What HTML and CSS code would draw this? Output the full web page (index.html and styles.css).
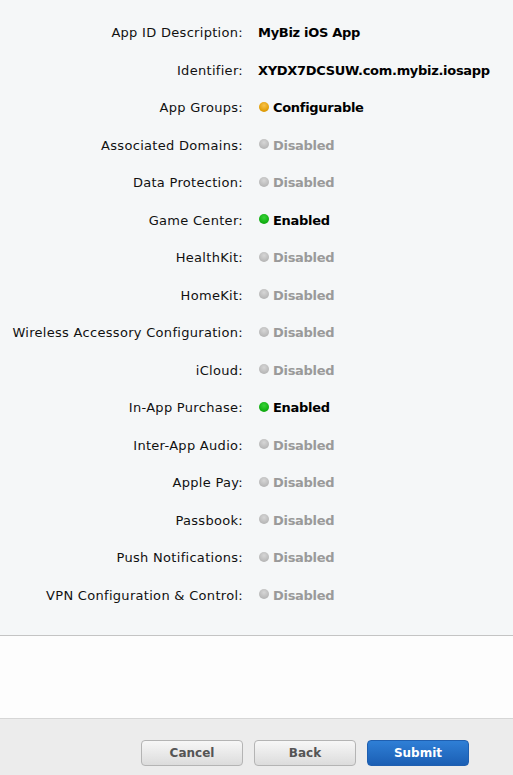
FILE: index.html
```html
<!DOCTYPE html>
<html>
<head>
<meta charset="utf-8">
<link rel="stylesheet" href="styles.css">
</head>
<body>
<div class="page">
  <div class="details">
    <div class="row"><div class="label">App ID Description:</div><div class="value">MyBiz iOS App</div></div>
    <div class="row"><div class="label">Identifier:</div><div class="value">XYDX7DCSUW.com.mybiz.iosapp</div></div>
    <div class="row"><div class="label">App Groups:</div><div class="value"><span class="dot orange"></span>Configurable</div></div>
    <div class="row"><div class="label">Associated Domains:</div><div class="value off"><span class="dot gray"></span>Disabled</div></div>
    <div class="row"><div class="label">Data Protection:</div><div class="value off"><span class="dot gray"></span>Disabled</div></div>
    <div class="row"><div class="label">Game Center:</div><div class="value"><span class="dot green"></span>Enabled</div></div>
    <div class="row"><div class="label">HealthKit:</div><div class="value off"><span class="dot gray"></span>Disabled</div></div>
    <div class="row"><div class="label">HomeKit:</div><div class="value off"><span class="dot gray"></span>Disabled</div></div>
    <div class="row"><div class="label">Wireless Accessory Configuration:</div><div class="value off"><span class="dot gray"></span>Disabled</div></div>
    <div class="row"><div class="label">iCloud:</div><div class="value off"><span class="dot gray"></span>Disabled</div></div>
    <div class="row"><div class="label">In-App Purchase:</div><div class="value"><span class="dot green"></span>Enabled</div></div>
    <div class="row"><div class="label">Inter-App Audio:</div><div class="value off"><span class="dot gray"></span>Disabled</div></div>
    <div class="row"><div class="label">Apple Pay:</div><div class="value off"><span class="dot gray"></span>Disabled</div></div>
    <div class="row"><div class="label">Passbook:</div><div class="value off"><span class="dot gray"></span>Disabled</div></div>
    <div class="row"><div class="label">Push Notifications:</div><div class="value off"><span class="dot gray"></span>Disabled</div></div>
    <div class="row"><div class="label">VPN Configuration &amp; Control:</div><div class="value off"><span class="dot gray"></span>Disabled</div></div>
  </div>
  <div class="blank"></div>
  <div class="footer">
    <button class="btn">Cancel</button>
    <button class="btn">Back</button>
    <button class="btn primary">Submit</button>
  </div>
</div>
</body>
</html>
```
FILE: styles.css
```css
html, body {
  margin: 0;
  padding: 0;
  background: #fdfdfd;
}
body {
  font-family: "DejaVu Sans", "Liberation Sans", sans-serif;
  font-size: 13px;
  color: #111;
}
.page {
  width: 513px;
  height: 775px;
  display: flex;
  flex-direction: column;
}
.details {
  background: #f5f7f8;
  border-bottom: 1px solid #c4c4c4;
  padding: 14px 0 16px;
  height: 636px;
  box-sizing: border-box;
}
.row {
  display: grid;
  grid-template-columns: 243px 1fr;
  column-gap: 15px;
  height: 37.5px;
  align-items: center;
}
.label {
  text-align: right;
  color: #111;
  white-space: nowrap;
  letter-spacing: 0.3px;
}
.value {
  font-weight: bold;
  color: #000;
  display: flex;
  align-items: center;
  white-space: nowrap;
  letter-spacing: -0.3px;
}
.value.off {
  color: #9a9a9a;
}
.dot {
  width: 10px;
  height: 10px;
  border-radius: 50%;
  margin-right: 4px;
  margin-left: 1px;
  flex: none;
  position: relative;
  top: -1px;
}
.dot.orange { background: radial-gradient(circle at 50% 35%, #f9c34a, #e3a00b 60%, #c98a00); }
.dot.green { background: radial-gradient(circle at 50% 35%, #38d438, #14b014 60%, #0c9a0c); }
.dot.gray { background: radial-gradient(circle at 50% 35%, #d6d6d6, #bcbcbc 60%, #a8a8a8); }
.blank {
  background: #fdfdfd;
  height: 82px;
  border-bottom: 1px solid #d6d6d6;
}
.footer {
  flex: 1;
  background: #ececec;
  display: flex;
  justify-content: flex-end;
  align-items: flex-start;
  padding: 21px 44px 0 0;
  gap: 11px;
}
.btn {
  width: 102px;
  height: 26px;
  border-radius: 4px;
  border: 1px solid #b4b4b4;
  background: linear-gradient(#f7f7f7, #dcdcdc);
  font-family: "DejaVu Sans", sans-serif;
  font-size: 12px;
  font-weight: bold;
  color: #555;
  padding: 0;
}
.btn.primary {
  border-color: #1f5fb0;
  background: linear-gradient(#2f7fd6, #1b5fb4);
  color: #fff;
}
```
